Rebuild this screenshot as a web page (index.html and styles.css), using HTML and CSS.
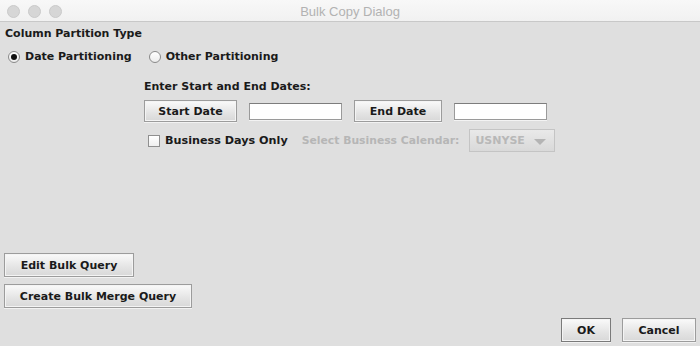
FILE: index.html
```html
<!DOCTYPE html>
<html lang="en">
    <head>
        <meta charset="UTF-8" />
        <title>Bulk Copy Dialog</title>
        <link rel="stylesheet" href="styles.css">
    </head>
    <body>
        <div class="titlebar">
            <div class="lights">
                <span class="light"></span>
                <span class="light"></span>
                <span class="light"></span>
            </div>
            <div class="title">Bulk Copy Dialog</div>
        </div>
        <div class="dialog">
            <div class="top">
                <div class="heading">Column Partition Type</div>
                <div class="radios">
                    <label class="radio"><span class="dot checked"></span>Date Partitioning</label>
                    <label class="radio"><span class="dot"></span>Other Partitioning</label>
                </div>
                <div class="dates">
                    <div class="label">Enter Start and End Dates:</div>
                    <div class="date-row">
                        <button class="btn start">Start Date</button>
                        <input class="field" type="text" />
                        <button class="btn end">End Date</button>
                        <input class="field" type="text" />
                    </div>
                    <div class="cal-row">
                        <label class="check"><span class="box"></span>Business Days Only</label>
                        <span class="muted">Select Business Calendar:</span>
                        <div class="combo">USNYSE<span class="arrow"></span></div>
                    </div>
                </div>
            </div>
            <div class="queries">
                <button class="btn edit">Edit Bulk Query</button>
                <button class="btn merge">Create Bulk Merge Query</button>
            </div>
            <div class="actions">
                <button class="btn ok">OK</button>
                <button class="btn cancel">Cancel</button>
            </div>
        </div>
    </body>
</html>
```

FILE: styles.css
```css
body {
    margin: 0;
    padding: 0;
    width: 700px;
    height: 346px;
    overflow: hidden;
    background-color: #dfdfdf;
    font-family: "DejaVu Sans", sans-serif;
    font-size: 11px;
    font-weight: bold;
    color: #1a1a1a;
}
.titlebar {
    position: relative;
    height: 21px;
    background: linear-gradient(#f8f8f8, #f1f1f1);
    border-bottom: 1px solid #c8c8c8;
}
.lights {
    display: flex;
    gap: 8px;
    padding: 5px 0 0 7px;
}
.light {
    width: 11px;
    height: 11px;
    border-radius: 50%;
    background-color: #d6d6d6;
    border: 0.5px solid #cacaca;
}
.title {
    position: absolute;
    left: 0;
    right: 0;
    top: 4px;
    text-align: center;
    font-family: "Liberation Sans", sans-serif;
    font-weight: normal;
    font-size: 13px;
    color: #b2b2b2;
}
.dialog {
    display: flex;
    flex-direction: column;
    height: 324px;
}
.top {
    flex: 1;
    padding-left: 5px;
}
.heading {
    margin-top: 4px;
    height: 16px;
    line-height: 16px;
}
.radios {
    display: flex;
    gap: 17px;
    margin-top: 7px;
    padding-left: 3px;
    height: 16px;
    line-height: 16px;
}
.radio {
    display: flex;
    align-items: center;
}
.dot {
    box-sizing: border-box;
    width: 12px;
    height: 12px;
    border-radius: 50%;
    border: 1px solid #8a8a8a;
    background: linear-gradient(#ffffff, #ececec);
    margin-right: 5px;
    position: relative;
}
.dot.checked::after {
    content: "";
    position: absolute;
    left: 2px;
    top: 2px;
    width: 6px;
    height: 6px;
    border-radius: 50%;
    background-color: #111;
}
.dates {
    padding-left: 139px;
}
.label {
    margin-top: 14px;
    height: 16px;
    line-height: 16px;
}
.date-row {
    display: flex;
    align-items: center;
    margin-top: 5px;
    height: 22px;
}
.btn {
    box-sizing: border-box;
    height: 22px;
    padding: 0;
    font-family: "DejaVu Sans", sans-serif;
    font-size: 11px;
    font-weight: bold;
    color: #1a1a1a;
    background: linear-gradient(#fafafa, #e4e4e4 60%, #d8d8d8);
    border: 1px solid #9c9c9c;
    box-shadow: inset 0 0 0 1px #f4f4f4, 0 1px 0 #f2f2f2;
}
.start {
    width: 93px;
}
.end {
    width: 88px;
    margin-left: 12px;
}
.field {
    box-sizing: border-box;
    width: 93px;
    height: 17px;
    margin-left: 12px;
    border: 1px solid #9a9a9a;
    border-top-color: #7d7d7d;
    background-color: #fff;
    box-shadow: 0 1px 0 #f3f3f3;
}
.cal-row {
    display: flex;
    align-items: center;
    margin-top: 7px;
    padding-left: 4px;
    height: 23px;
}
.check {
    display: flex;
    align-items: center;
    font-size: 11.2px;
}
.box {
    box-sizing: border-box;
    width: 12px;
    height: 12px;
    border: 1px solid #8f8f8f;
    background: linear-gradient(#ffffff, #efefef);
    margin-right: 5px;
}
.muted {
    margin-left: 14px;
    font-size: 10.8px;
    color: #b6b6b6;
}
.combo {
    box-sizing: border-box;
    position: relative;
    width: 86px;
    height: 23px;
    line-height: 21px;
    margin-left: 10px;
    padding-left: 5px;
    color: #b8b8b8;
    border: 1px solid #c4c4c4;
    background: linear-gradient(#e9e9e9, #d9d9d9);
}
.arrow {
    position: absolute;
    right: 8px;
    top: 9px;
    border-left: 6px solid transparent;
    border-right: 6px solid transparent;
    border-top: 6px solid #b4b4b4;
}
.queries {
    display: flex;
    flex-direction: column;
    align-items: flex-start;
    gap: 7px;
    padding-left: 4px;
}
.edit {
    width: 130px;
    height: 24px;
}
.merge {
    width: 188px;
    height: 24px;
}
.actions {
    display: flex;
    justify-content: flex-end;
    gap: 11px;
    padding: 10px 4px 4px 0;
}
.ok {
    width: 50px;
    height: 24px;
    border-color: #7a7a7a;
}
.cancel {
    width: 74px;
    height: 24px;
}
```
